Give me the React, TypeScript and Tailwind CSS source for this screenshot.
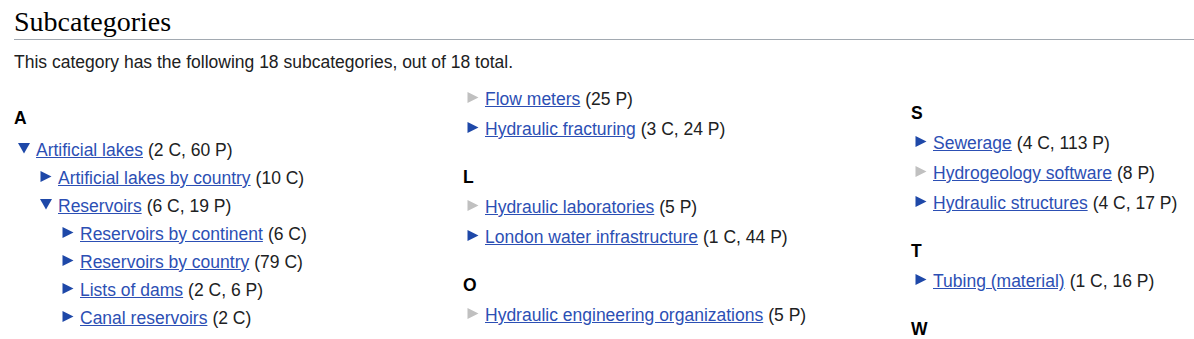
import React from "react";

type Item = {
  kind: "item";
  label: string;
  count: string;
  level?: number;
  state: "open" | "closed" | "empty";
};
type Head = { kind: "head"; letter: string };
type Entry = Item | Head;

const col1: Entry[] = [
  { kind: "head", letter: "A" },
  { kind: "item", label: "Artificial lakes", count: "(2 C, 60 P)", level: 0, state: "open" },
  { kind: "item", label: "Artificial lakes by country", count: "(10 C)", level: 1, state: "closed" },
  { kind: "item", label: "Reservoirs", count: "(6 C, 19 P)", level: 1, state: "open" },
  { kind: "item", label: "Reservoirs by continent", count: "(6 C)", level: 2, state: "closed" },
  { kind: "item", label: "Reservoirs by country", count: "(79 C)", level: 2, state: "closed" },
  { kind: "item", label: "Lists of dams", count: "(2 C, 6 P)", level: 2, state: "closed" },
  { kind: "item", label: "Canal reservoirs", count: "(2 C)", level: 2, state: "closed" },
];

const col2: Entry[] = [
  { kind: "item", label: "Flow meters", count: "(25 P)", state: "empty" },
  { kind: "item", label: "Hydraulic fracturing", count: "(3 C, 24 P)", state: "closed" },
  { kind: "head", letter: "L" },
  { kind: "item", label: "Hydraulic laboratories", count: "(5 P)", state: "empty" },
  { kind: "item", label: "London water infrastructure", count: "(1 C, 44 P)", state: "closed" },
  { kind: "head", letter: "O" },
  { kind: "item", label: "Hydraulic engineering organizations", count: "(5 P)", state: "empty" },
];

const col3: Entry[] = [
  { kind: "head", letter: "S" },
  { kind: "item", label: "Sewerage", count: "(4 C, 113 P)", state: "closed" },
  { kind: "item", label: "Hydrogeology software", count: "(8 P)", state: "empty" },
  { kind: "item", label: "Hydraulic structures", count: "(4 C, 17 P)", state: "closed" },
  { kind: "head", letter: "T" },
  { kind: "item", label: "Tubing (material)", count: "(1 C, 16 P)", state: "closed" },
  { kind: "head", letter: "W" },
];

function Bullet({ state }: { state: Item["state"] }) {
  if (state === "open") {
    return (
      <svg width="12" height="11" viewBox="0 0 12 11" className="mb-[3px] shrink-0">
        <polygon points="0,0 12,0 6,10.5" fill="#1e48a8" />
      </svg>
    );
  }
  return (
    <svg width="12" height="11" viewBox="0 0 12 11" className="mb-[3px] shrink-0">
      <polygon points="0.5,0 11.5,5.5 0.5,11" fill={state === "empty" ? "#c0c0c0" : "#1e48a8"} />
    </svg>
  );
}

const indent = ["pl-[4px]", "pl-[26px]", "pl-[48px]"];

function Column({ entries, first, tight, top }: { entries: Entry[]; first: string; tight?: boolean; top: string }) {
  return (
    <div className={`flex flex-col ${top}`}>
      {entries.map((e, i) =>
        e.kind === "head" ? (
          <h3
            key={i}
            className={`h-[30px] flex items-center font-bold text-[17.5px] text-black ${
              i === 0 ? first : "mt-[18px]"
            }`}
          >
            {e.letter}
          </h3>
        ) : (
          <div
            key={i}
            className={`flex items-center ${tight ? "h-[28px]" : "h-[30px]"} ${indent[e.level ?? 0]} whitespace-nowrap`}
          >
            <Bullet state={e.state} />
            <a href="#" className="ml-[6px] text-[#2c4fb4] underline">
              {e.label}
            </a>
            <span className="ml-[5px]">{e.count}</span>
          </div>
        )
      )}
    </div>
  );
}

export default function App() {
  return (
    <div
      className="w-[1194px] h-[339px] overflow-hidden bg-white pl-[14px] text-[#202122] text-[17.5px]"
      style={{ fontFamily: '"Liberation Sans", Arial, sans-serif' }}
    >
      <h2
        className="pt-[6px] pb-[2px] leading-[31px] text-[28px] text-black border-b border-[#a2a9b1]"
        style={{ fontFamily: '"Liberation Serif", Georgia, serif' }}
      >
        Subcategories
      </h2>
      <p className="mt-[10px] leading-[24px]">
        This category has the following 18 subcategories, out of 18 total.
      </p>
      <div className="grid grid-cols-[449px_448px_300px]">
        <Column entries={col1} first="mb-[3px]" tight top="pt-[29px]" />
        <Column entries={col2} first="" top="pt-[10px]" />
        <Column entries={col3} first="" top="pt-[24px]" />
      </div>
    </div>
  );
}
